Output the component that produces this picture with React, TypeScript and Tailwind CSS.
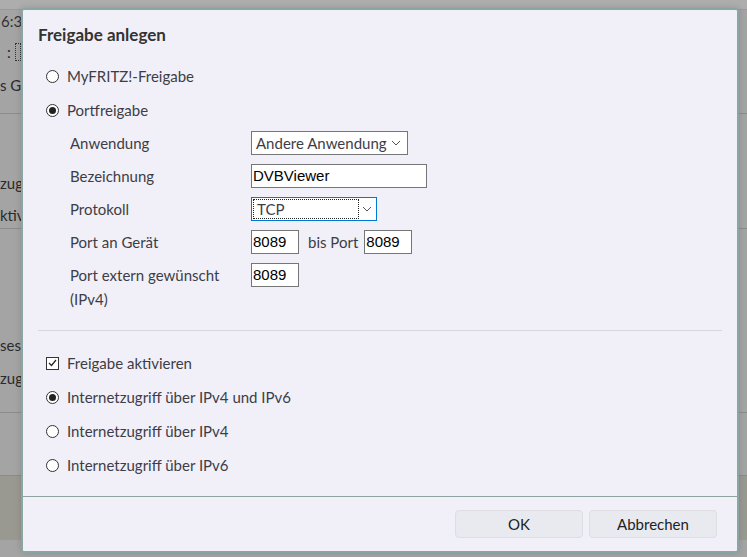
import React from "react"

const font = { fontFamily: "Lato, 'Noto Sans', sans-serif" }

function Radio({ checked, label }: { checked?: boolean; label: string }) {
    return (
        <div className="flex items-center h-[20px]">
            <span className="ml-[8px] w-[13px] h-[13px] rounded-full border border-[#333] bg-white flex items-center justify-center">
                {checked && <span className="w-[7px] h-[7px] rounded-full bg-[#222]" />}
            </span>
            <span className="ml-[8px] text-[15px] text-[#3d3d47]">{label}</span>
        </div>
    )
}

function Row({ label, children, tall }: { label: React.ReactNode; children: React.ReactNode; tall?: boolean }) {
    return (
        <div className={`flex ${tall ? "h-[48px]" : "h-[33px]"}`}>
            <div className="w-[213px] pl-[32px] text-[15px] text-[#3d3d47] leading-[24px]">{label}</div>
            <div className="flex items-start">{children}</div>
        </div>
    )
}

function Chevron() {
    return (
        <svg width="10" height="6" viewBox="0 0 10 6" className="text-[#555]">
            <path d="M1 1 L5 5 L9 1" fill="none" stroke="currentColor" strokeWidth="1" />
        </svg>
    )
}

function TextBox({ value, w }: { value: string; w: string }) {
    return (
        <div className={`${w} h-[24px] bg-white border border-[#767676] flex items-center pl-[1px] text-[15px] text-black`} style={{ fontFamily: "'Liberation Sans', Arial, sans-serif" }}>
            {value}
        </div>
    )
}

export default function App() {
    return (
        <div className="relative w-[747px] h-[557px] overflow-hidden bg-[#a4a4a4]" style={font}>
            {/* page behind the overlay */}
            <div className="flex flex-col text-[15px] text-[#2a2a2a]">
                <div className="h-[10px] bg-[#adadad] border-b border-[#999]" />
                <div className="h-[24px] pl-[1px] leading-[22px] text-[#333]">6:3</div>
                <div className="h-[36px] flex items-center pl-[7px] gap-[4px]">
                    <span>:</span>
                    <span className="w-[6px] h-[18px] border border-dotted border-[#333]" />
                </div>
                <div className="h-[30px] leading-[30px]">s G</div>
                <div className="h-[14px] border-b border-[#8c8c8c]" />
                <div className="h-[58px]" />
                <div className="h-[22px] leading-[22px]">zug</div>
                <div className="h-[10px]" />
                <div className="h-[22px] leading-[22px]">ktiv</div>
                <div className="h-[3px] border-b border-[#8c8c8c]" />
                <div className="h-[105px]" />
                <div className="h-[22px] leading-[22px]">ses</div>
                <div className="h-[11px]" />
                <div className="h-[22px] leading-[22px]">zug</div>
                <div className="h-[24px] border-b border-[#8c8c8c]" />
                <div className="h-[63px] border-b border-[#8c8c8c]" />
                <div className="h-[64px] bg-[#999891]" />
            </div>

            {/* dialog */}
            <div className="absolute left-[21px] top-[8px] w-[718px] h-[545px] bg-[#f1f0f8] border-2 border-[#89a6a3] rounded-[3px] shadow-[0_0_6px_rgba(0,0,0,0.15)] flex flex-col">
                <div className="flex-1 px-[15px] pt-[14px]">
                    <div className="text-[17px] font-bold text-[#333] leading-[22px]">Freigabe anlegen</div>
                    <div className="mt-[20px] flex flex-col gap-[14px]">
                        <Radio label="MyFRITZ!-Freigabe" />
                        <Radio checked label="Portfreigabe" />
                    </div>
                    <div className="mt-[11px] flex flex-col">
                        <Row label="Anwendung">
                            <div className="w-[157px] h-[24px] bg-white border border-[#767676] flex items-center justify-between pl-[4px] pr-[6px] text-[15px] text-[#3d3d47]">
                                <span>Andere Anwendung</span>
                                <Chevron />
                            </div>
                        </Row>
                        <Row label="Bezeichnung">
                            <TextBox value="DVBViewer" w="w-[176px]" />
                        </Row>
                        <Row label="Protokoll">
                            <div className="w-[126px] h-[24px] bg-white border border-[#0078d7] flex items-center p-[1px]">
                                <div className="w-[106px] h-full border border-dotted border-[#222] pl-[3px] text-[15px] text-[#3d3d47] leading-[18px]">TCP</div>
                                <div className="flex-1 flex justify-center">
                                    <Chevron />
                                </div>
                            </div>
                        </Row>
                        <Row label="Port an Gerät">
                            <TextBox value="8089" w="w-[48px]" />
                            <span className="ml-[9px] mr-[6px] text-[15px] text-[#3d3d47] leading-[24px]">bis Port</span>
                            <TextBox value="8089" w="w-[48px]" />
                        </Row>
                        <Row tall label={<>Port extern gewünscht<br />(IPv4)</>}>
                            <TextBox value="8089" w="w-[48px]" />
                        </Row>
                    </div>
                    <div className="mt-[19px] border-t border-[#d6d6dc]" />
                    <div className="mt-[22px] flex flex-col gap-[14px]">
                        <div className="flex items-center h-[20px]">
                            <span className="ml-[8px] w-[13px] h-[13px] border border-[#333] bg-white flex items-center justify-center">
                                <svg width="9" height="8" viewBox="0 0 9 8">
                                    <path d="M1 4 L3.5 6.5 L8 1" fill="none" stroke="#222" strokeWidth="1.2" />
                                </svg>
                            </span>
                            <span className="ml-[8px] text-[15px] text-[#3d3d47]">Freigabe aktivieren</span>
                        </div>
                        <Radio checked label="Internetzugriff über IPv4 und IPv6" />
                        <Radio label="Internetzugriff über IPv4" />
                        <Radio label="Internetzugriff über IPv6" />
                    </div>
                </div>
                <div className="h-[55px] border-t border-[#8fa3a1] flex justify-end items-start pt-[13px] pr-[20px] gap-[6px]">
                    <button className="w-[128px] h-[28px] rounded-[4px] bg-[#e8eaf0] border border-[#dcdee4] text-[15px] text-[#222]">OK</button>
                    <button className="w-[128px] h-[28px] rounded-[4px] bg-[#e8eaf0] border border-[#dcdee4] text-[15px] text-[#222]">Abbrechen</button>
                </div>
            </div>
        </div>
    )
}
